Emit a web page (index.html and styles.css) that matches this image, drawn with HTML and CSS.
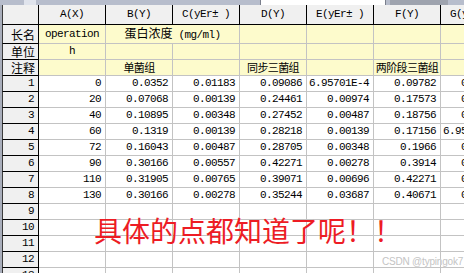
FILE: index.html
```html
<!DOCTYPE html>
<html>
  <head>
    <title>Book1 - Sheet1</title>
    <link rel="stylesheet" href="styles.css">
  </head>
  <body>
    <div class="strip">
      <span class="tab"></span>
      <span class="field"></span>
      <span class="btn"></span>
    </div>
    <div class="sheet">
      <table class="grid">
        <colgroup>
          <col class="c-head" />
          <col class="c-data" span="7" />
        </colgroup>
        <tr class="colhead">
          <th class="corner"></th>
          <th>A(X)</th>
          <th>B(Y)</th>
          <th>C(yEr<span class="fw">±</span>)</th>
          <th>D(Y)</th>
          <th>E(yEr<span class="fw">±</span>)</th>
          <th>F(Y)</th>
          <th>G(yEr<span class="fw">±</span>)</th>
        </tr>
        <tr class="label">
          <th class="cjk">长名</th>
          <td class="mid">operation</td>
          <td class="mid" colspan="2"><span class="zh">蛋白浓度</span> (mg/ml)</td>
          <td></td><td></td><td></td><td></td>
        </tr>
        <tr class="label">
          <th class="cjk">单位</th>
          <td class="mid">h</td>
          <td></td><td></td><td></td><td></td><td></td><td></td>
        </tr>
        <tr class="label">
          <th class="cjk">注释</th>
          <td></td>
          <td class="mid zh"><div class="clip">单菌组</div></td>
          <td></td>
          <td class="mid zh"><div class="clip">同步三菌组</div></td>
          <td></td>
          <td class="mid zh"><div class="clip">两阶段三菌组</div></td>
          <td></td>
        </tr>
        <tr><th>1</th><td>0</td><td>0.0352</td><td>0.01183</td><td>0.09086</td><td>6.95701E-4</td><td>0.09782</td><td>0.00417</td></tr>
        <tr><th>2</th><td>20</td><td>0.07068</td><td>0.00139</td><td>0.24461</td><td>0.00974</td><td>0.17573</td><td>0.00278</td></tr>
        <tr><th>3</th><td>40</td><td>0.10895</td><td>0.00348</td><td>0.27452</td><td>0.00487</td><td>0.18756</td><td>0.00557</td></tr>
        <tr><th>4</th><td>60</td><td>0.1319</td><td>0.00139</td><td>0.28218</td><td>0.00139</td><td>0.17156</td><td>6.95701E-4</td></tr>
        <tr><th>5</th><td>72</td><td>0.16043</td><td>0.00487</td><td>0.28705</td><td>0.00348</td><td>0.1966</td><td>0.00348</td></tr>
        <tr><th>6</th><td>90</td><td>0.30166</td><td>0.00557</td><td>0.42271</td><td>0.00278</td><td>0.3914</td><td>0.00696</td></tr>
        <tr><th>7</th><td>110</td><td>0.31905</td><td>0.00765</td><td>0.39071</td><td>0.00696</td><td>0.42271</td><td>0.00487</td></tr>
        <tr><th>8</th><td>130</td><td>0.30166</td><td>0.00278</td><td>0.35244</td><td>0.03687</td><td>0.40671</td><td>0.00139</td></tr>
        <tr><th>9</th><td></td><td></td><td></td><td></td><td></td><td></td><td></td></tr>
        <tr><th>10</th><td></td><td></td><td></td><td></td><td></td><td></td><td></td></tr>
        <tr><th>11</th><td></td><td></td><td></td><td></td><td></td><td></td><td></td></tr>
        <tr><th>12</th><td></td><td></td><td></td><td></td><td></td><td></td><td></td></tr>
        <tr><th>13</th><td></td><td></td><td></td><td></td><td></td><td></td><td></td></tr>
      </table>
      <div class="note">具体的点都知道了呢！！</div>
      <div class="mark">CSDN @typingok7</div>
    </div>
  </body>
</html>
```

FILE: styles.css
```css
html,
body {
  margin: 0;
  overflow: hidden;
}
body {
  background-color: #a9aebb;
  font-family: "Liberation Mono", "Noto Sans CJK SC", monospace;
}

/* toolbar edge above the sheet */
.strip {
  height: 5px;
  display: flex;
  background-color: #b7bdcc;
}
.strip .tab {
  width: 12px;
  margin-left: 24px;
  background-color: #dfe3ec;
}
.strip .field {
  width: 124px;
  margin-left: 224px;
  background-color: #fff;
  border-left: 1px solid #7a7f8c;
  border-right: 1px solid #7a7f8c;
}
.strip .btn {
  width: 58px;
  margin-left: 4px;
  background-color: #9ea3ae;
}

.sheet {
  position: relative;
  padding-left: 2px;
}

.grid {
  table-layout: fixed;
  border-collapse: separate;
  border-spacing: 0;
  width: 506px;
  background-color: #fff;
}
.c-head {
  width: 37px;
}
.c-data {
  width: 67px;
}
.grid th,
.grid td {
  box-sizing: border-box;
  height: 16px;
  padding: 0 4px 0 0;
  font-size: 11px;
  letter-spacing: -0.6px;
  line-height: 15px;
  font-weight: normal;
  white-space: nowrap;
  overflow: hidden;
  text-align: right;
  color: #000;
}
.grid td {
  border-right: 1px solid #c3c3c3;
  border-bottom: 1px solid #c3c3c3;
}
.grid th {
  background-color: #f0f0f0;
  border-right: 1px solid #000;
  border-bottom: 1px solid #000;
}
.grid tr th:first-child {
  border-left: 1px solid #3c3c3c;
}

.colhead th {
  height: 20px;
  padding: 0;
  text-align: center;
  line-height: 19px;
}
.fw {
  display: inline-block;
  width: 12px;
  text-align: left;
}

.label td {
  background-color: #fdfbcc;
}
.grid .cjk {
  font-family: "Noto Sans CJK SC", sans-serif;
  font-size: 12px;
  letter-spacing: 0;
  padding-right: 3px;
}
.grid .mid {
  padding: 0;
  text-align: center;
}
.zh {
  font-family: "Noto Sans CJK SC", sans-serif;
  font-size: 12px;
  letter-spacing: 0;
}
.clip {
  display: flex;
  justify-content: center;
  overflow: hidden;
}

.note {
  position: absolute;
  left: 94px;
  top: 211px;
  font-family: "Noto Sans CJK SC", sans-serif;
  font-size: 28px;
  line-height: 28px;
  color: #ed1c24;
  white-space: nowrap;
}
.mark {
  position: absolute;
  left: 382px;
  top: 251px;
  font-family: "Liberation Sans", Arial, sans-serif;
  font-size: 10px;
  letter-spacing: -0.2px;
  color: #c4c4c4;
  text-shadow: 0 0 1px #fff;
  white-space: nowrap;
}
```
